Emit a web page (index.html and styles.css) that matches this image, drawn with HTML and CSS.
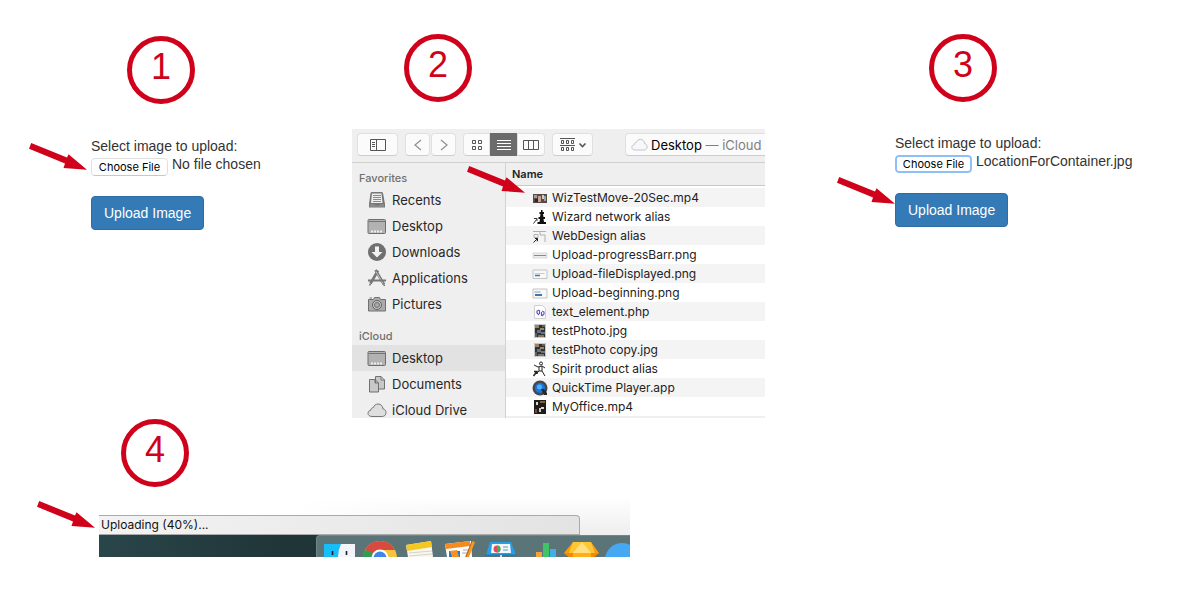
FILE: index.html
```html
<!DOCTYPE html>
<html lang="en">
<head>
<meta charset="utf-8">
<title>Upload an image in four steps</title>
<link rel="stylesheet" href="styles.css">
</head>
<body>
<svg class="sprites" aria-hidden="true">
  <symbol id="arrow" viewBox="0 0 60 30"><path d="M3.200 0 1 5.800l36 14.600-1.500 4.600L59 26.700 40.500 11.300l-1.500 3.200z" fill="#d0021b"/></symbol>
  <symbol id="desk" viewBox="0 0 20 20"><rect x="1" y="3.500" width="17.500" height="14" rx="1" fill="#b2b2b2" stroke="#6e6e6e"/><path d="M1.500 5.500h16.500" stroke="#747474"/><path d="M4 15.500h12" stroke="#eee" stroke-width="2" stroke-dasharray="2 1"/></symbol>
  <symbol id="cloud" viewBox="0 0 20 20"><path d="M5 16.500C2.500 16.500 1 15 1 13.300c0-1.700 1.200-2.900 2.800-3C3.900 8.500 5 7.600 6.300 7.700 7 5.300 8.800 4 11 4c2.900 0 4.800 2 4.900 4.900 2 .3 3.100 1.800 3.100 3.700 0 2.300-1.600 3.900-3.800 3.900z" fill="#dedede" stroke="#777"/></symbol>
  <symbol id="photo" viewBox="0 0 16 16"><path d="M2.500 1.500h11v13h-11z" fill="#35312d" stroke="#c9c9c9"/><path d="M3 2h4v3H3zM8 5h4v2H8z" fill="#9c8464"/><path d="M5 7h4v3H5zM9 9h4v2H9z" fill="#5d7890"/><path d="M6 12h6v2H6z" fill="#847565"/><path d="M10 2h3v2h-3zM3 10h2v4H3z" fill="#5e6366"/></symbol>
</svg>
<main class="guide">
  <div class="top">
    <section class="step step-one">
      <h2 class="badge">1</h2>
      <form class="form">
        <label for="file-one">Select image to upload:</label>
        <div class="picker"><input class="file" id="file-one" type="file" accept="image/*"><span class="file-name">No file chosen</span></div>
        <button class="upload" type="button">Upload Image</button>
      </form>
      <svg class="arrow arrow-one"><use href="#arrow"/></svg>
    </section>

    <section class="step step-two">
      <h2 class="badge">2</h2>
      <div class="finder">
        <div class="toolbar">
          <button class="tool" type="button" aria-label="Toggle sidebar"><svg width="18" height="14" viewBox="0 0 18 14" fill="none" stroke="#555"><path d="M1.500 1.500h15v11h-15zM7.500 1.500v11M3 4.500h3M3 6.500h3M3 8.500h3"/></svg></button>
          <div class="pair">
            <button class="tool" type="button" aria-label="Back"><svg width="12" height="14" viewBox="0 0 12 14" fill="none" stroke="#939393" stroke-width="1.300"><path d="M9 2 3 7l6 5"/></svg></button>
            <button class="tool" type="button" aria-label="Forward"><svg width="12" height="14" viewBox="0 0 12 14" fill="none" stroke="#939393" stroke-width="1.300"><path d="m3 2 6 5-6 5"/></svg></button>
          </div>
          <div class="views">
            <button class="tool" type="button" aria-label="Icons"><svg width="14" height="14" viewBox="0 0 14 14" fill="none" stroke="#555"><path d="M2.500 2.500h3v3h-3zM8.500 2.500h3v3h-3zM2.500 8.500h3v3h-3zM8.500 8.500h3v3h-3z"/></svg></button>
            <button class="tool active" type="button" aria-label="List"><svg width="16" height="14" viewBox="0 0 16 14" stroke="#fff"><path d="M1 2.500h14M1 5.500h14M1 8.500h14M1 11.500h14"/></svg></button>
            <button class="tool" type="button" aria-label="Columns"><svg width="18" height="14" viewBox="0 0 18 14" fill="none" stroke="#555"><path d="M1.500 2.500h15v9h-15zM6.500 2.500v9M11.500 2.500v9"/></svg></button>
          </div>
          <button class="tool" type="button" aria-label="Arrange"><svg width="28" height="14" viewBox="0 0 28 14" fill="none" stroke="#555"><path d="M1 .5h15M1 7.500h15M2.500 2.500h2v3h-2zM7.500 2.500h2v3h-2zM12.500 2.500h2v3h-2zM2.500 9.500h2v3h-2zM7.500 9.500h2v3h-2zM12.500 9.500h2v3h-2z"/><path d="m20.500 5.500 3 3 3-3" stroke-width="1.600"/></svg></button>
          <button class="tool place" type="button"><svg class="place-icon" viewBox="0 0 20 20"><path d="M5 16.500C2.500 16.500 1 15 1 13.300c0-1.700 1.200-2.900 2.800-3C3.900 8.500 5 7.600 6.300 7.700 7 5.300 8.800 4 11 4c2.900 0 4.800 2 4.900 4.900 2 .3 3.100 1.800 3.100 3.700 0 2.300-1.600 3.900-3.800 3.900z" fill="#f6f8fa" stroke="#b5bcc5"/></svg><span>Desktop <span class="muted">— iCloud</span></span></button>
        </div>
        <div class="panes">
          <nav class="sidebar" aria-label="Locations">
            <h3>Favorites</h3>
            <a href="#"><svg viewBox="0 0 20 20"><path d="M4.500 2h10.500l1 1 2 11v3.500H2V14L3.500 3z" fill="#777"/><path d="M5 3.500h9.500l1 9.500H4z" fill="#eee"/><path d="M6 5.500h8M6 7.500h8M6 9.500h8M6 11.500h8" stroke="#8a8a8a"/><path d="M3 14h4l1 1.500h4l1-1.500h4v3H3z" fill="#8a8a8a"/></svg>Recents</a>
            <a href="#"><svg><use href="#desk"/></svg>Desktop</a>
            <a href="#"><svg viewBox="0 0 20 20"><circle cx="10" cy="10" r="9" fill="#707070"/><path d="M8 4.500h4V10h3.500L10 15.500 4.500 10H8z" fill="#f2f2f2"/></svg>Downloads</a>
            <a href="#"><svg viewBox="0 0 20 20" fill="none" stroke="#777"><path d="m8.500 2 8.500 14.500M11 2.500 3.500 15.500" stroke-width="2.600"/><path d="m9 3.500 7 12" stroke="#c4c4c4"/><path d="M1 12.500h18" stroke-width="2"/><path d="m3.500 15.500-1 2M17 16.500l.5 1.500" stroke-width="1.500"/></svg>Applications</a>
            <a href="#"><svg viewBox="0 0 20 20"><path d="M1.500 5.500h5l1-2h5l1 2h5v11.500h-17z" fill="#aaa" stroke="#707070"/><circle cx="10" cy="11" r="4.500" fill="#c5c5c5" stroke="#626262"/><circle cx="10" cy="11" r="2.500" fill="#aaa" stroke="#707070"/><path d="M2.500 4h2.500" stroke="#707070"/></svg>Pictures</a>
            <h3>iCloud</h3>
            <a class="current" href="#"><svg><use href="#desk"/></svg>Desktop</a>
            <a href="#"><svg viewBox="0 0 20 20" fill="#c8c8c8" stroke="#707070"><path d="M8.500 2.500H14l3.500 3.500v9h-9zM14 2.500V6h3.500"/><path d="M2.500 5.500H8L11.500 9v9h-9zM8 5.500V9h3.500"/></svg>Documents</a>
            <a href="#"><svg><use href="#cloud"/></svg>iCloud Drive</a>
          </nav>
          <table class="files">
            <thead><tr><th scope="col">Name</th></tr></thead>
            <tbody>
              <tr><td><svg viewBox="0 0 16 16"><path d="M1 4h14v9H1z" fill="#554a45"/><path d="M2 5h3v3H2zM12 6h2v5h-2z" fill="#98a0a5"/><path d="M6 6h3v6H6z" fill="#caa08c"/><path d="M10 5h2v4h-2z" fill="#d8c8c0"/><path d="M3 9h3v3H3z" fill="#302725"/></svg>WizTestMove-20Sec.mp4</td></tr>
              <tr><td><svg viewBox="0 0 16 16"><path d="M9 1h1.500v2H12v2h-1l.5 3H13v2h-1.500l.5 3h2v2H5.500v-2h2L8 10H6.500V8H8l.5-3h-1V3H9z" fill="#111"/><path d="m1.500 14.500 3-4M2 9.500h3V12" fill="none" stroke="#333"/></svg>Wizard network alias</td></tr>
              <tr><td><svg viewBox="0 0 16 16" fill="none" stroke="#b0b0b0"><path d="M1 3.500h13M2 6.500h4v3H2zM8 3v4h5v7M5 9v5"/><path d="m1.500 14.500 4-4M3 10.500h2.500V13" stroke="#222"/></svg>WebDesign alias</td></tr>
              <tr><td><svg viewBox="0 0 16 16"><path d="M1 6h14v5H1z" fill="#eee" stroke="#bbb" stroke-width=".5"/><path d="M2 8.500h12" stroke="#888"/></svg>Upload-progressBarr.png</td></tr>
              <tr><td><svg viewBox="0 0 16 16"><path d="M1 4h14v8.500H1z" fill="#f8f8f8" stroke="#c4c4c4"/><path d="M2.500 7.500h10" stroke="#ccc"/><path d="M3 9.500h5" stroke="#3478b7" stroke-width="1.500"/></svg>Upload-fileDisplayed.png</td></tr>
              <tr><td><svg viewBox="0 0 16 16"><path d="M1 4h14v9H1z" fill="#f8f8f8" stroke="#c4c4c4"/><path d="M2.500 7h6" stroke="#999"/><path d="M3 10h7" stroke="#3478b7" stroke-width="2"/></svg>Upload-beginning.png</td></tr>
              <tr><td><svg viewBox="0 0 16 16"><path d="M2.500 1.500h8l3 3v10h-11z" fill="#fff" stroke="#cfcfcf"/><path d="M7 6 5 7v2l2 2M10 7l2 1v2l-2 2M7.500 6v4M9.500 8v4" fill="none" stroke="#6257c8" stroke-width="1.200"/></svg>text_element.php</td></tr>
              <tr><td><svg><use href="#photo"/></svg>testPhoto.jpg</td></tr>
              <tr><td><svg><use href="#photo"/></svg>testPhoto copy.jpg</td></tr>
              <tr><td><svg viewBox="0 0 16 16" fill="none" stroke="#222"><circle cx="9" cy="2.500" r="1.500"/><path d="m2 4 4 2 4-1 3 2M7 6v4l-3 3M10 5v5l3 5M7 10h3"/><path d="m1.500 15 3-4M2 10.500h3V13" stroke-width="1.500"/></svg>Spirit product alias</td></tr>
              <tr><td><svg viewBox="0 0 16 16"><circle cx="8" cy="8" r="7.500" fill="#44474d"/><circle cx="8" cy="8" r="5" fill="#1879d8"/><circle cx="7.500" cy="7" r="2.500" fill="#4fb0ff"/><path d="M9 9h3l3 4v2h-3z" fill="#24272c"/></svg>QuickTime Player.app</td></tr>
              <tr><td><svg viewBox="0 0 16 16"><path d="M2 1h12v14H2z" fill="#201c1a"/><path d="M4 3h2v3H4zM9 8h3v2H9z" fill="#d9d6d0"/><path d="M8 2h5v2H8z" fill="#87602d"/><path d="M7 9h2v4H7z" fill="#c6c9cc"/><path d="M3 10h2v4H3z" fill="#79472f"/></svg>MyOffice.mp4</td></tr>
            </tbody>
          </table>
        </div>
      </div>
      <svg class="arrow arrow-two"><use href="#arrow"/></svg>
    </section>

    <section class="step step-three">
      <h2 class="badge">3</h2>
      <form class="form">
        <label for="file-three">Select image to upload:</label>
        <div class="picker"><input class="file focused" id="file-three" type="file" accept="image/*"><span class="file-name">LocationForContainer.jpg</span></div>
        <button class="upload" type="button">Upload Image</button>
      </form>
      <svg class="arrow arrow-three"><use href="#arrow"/></svg>
    </section>
  </div>

  <section class="step step-four">
    <h2 class="badge">4</h2>
    <div class="browser">
      <div class="status" role="status">Uploading (40%)...</div>
      <div class="desktop">
        <svg class="dock" viewBox="0 0 314 22" width="314" height="22" aria-hidden="true">
          <path d="M0 22V4Q0 0 4 0h310v22z" fill="#5b7478"/><path d="M.5 22V4Q.5.5 4 .5h310" fill="none" stroke="#6f868a"/>
          <path d="M8 22V9h31v13z" fill="#f2f4fa"/><path d="M8 22V9h17q-3 6-3 13z" fill="#18bdf8"/><path d="M16.500 16v4M30.500 16v4" stroke="#17222c" stroke-width="1.600"/>
          <circle cx="64" cy="23" r="17" fill="#f8c33e"/><path d="M49 15A17 17 0 0 1 79 15H64a8 8 0 0 0-7 4z" fill="#d84a3e"/><path d="M49 15q-3 4-2 8h10v-5z" fill="#2f9e54"/><circle cx="64" cy="23" r="8.500" fill="#fff"/><circle cx="64" cy="23" r="6.500" fill="#4285e8"/>
          <path d="m90 10 25-4 2 16H92z" fill="#f8f7ef"/><path d="m90 10 25-4 1 6-25 4z" fill="#f4c721"/><path d="m93 18 23-2M93 21l23-2" stroke="#d7d3c8"/>
          <path d="m129 9 26-3 1 16h-25z" fill="#fff"/><path d="m129 9 25-3v5l-24 3z" fill="#f58a21"/><path d="M133 16h11v6h-11z" fill="#2478cf"/><path d="m134 16 7-1 2 7h-7z" fill="#f59122"/><path d="M147 15h6M146 18h6" stroke="#aaa"/><path d="m156 6 3 1-6 15h-4z" fill="#f79a21"/><path d="m156 6-6 16" stroke="#b75a22"/>
          <path d="m174 7h21l5 13h-30z" fill="#269fe6"/><path d="M176 9h18l1 9h-20z" fill="#f5f8fb"/><circle cx="181" cy="14" r="3.500" fill="#e74a5d"/><path d="M181 14v-3.500a3.500 3.500 0 0 1 0 7z" fill="#35b85d"/><path d="M187 12h5M187 15h5" stroke="#469be0"/><path d="M169 20h31" stroke="#1975b7"/><path d="M184 20h2v2h-2z" fill="#ddd"/>
          <path d="M220 17h6v5h-6z" fill="#f2a33d"/><path d="M227 8h6v14h-6z" fill="#41c466"/><path d="M234 14h6v8h-6z" fill="#43ade8"/>
          <path d="M257 7h18l8 11-5 4h-25l-5-4z" fill="#f99b10"/><path d="M257 7h18l4 11h-26z" fill="#ffc633"/><path d="m257 18 9-11 9 11z" fill="#ffe080"/><path d="M248 18h35l-5 4h-25z" fill="#f08a09"/><path d="M257 18h18v4h-18z" fill="#ffb019"/>
          <circle cx="306" cy="25" r="17" fill="#46a7f2"/>
        </svg>
      </div>
    </div>
    <svg class="arrow arrow-four"><use href="#arrow"/></svg>
  </section>
</main>
</body>
</html>
```
FILE: styles.css
```css
* { box-sizing: border-box; }
body { margin: 0; background: #fff; color: #333; font: 14px/20px "Liberation Sans", Arial, sans-serif; }
h2, h3 { margin: 0; font-weight: 400; }
.sprites { display: block; width: 0; height: 0; }
.guide { padding-bottom: 48px; }
.top { display: grid; grid-template-columns: 352fr 543fr 295fr; align-items: start; }
.step { position: relative; }
.step-one { padding: 36px 0 0 91px; }
.step-two { padding-top: 34px; }
.step-three { padding-top: 34px; }
.step-four { padding-left: 99px; margin-top: 1px; }

.badge { width: 68px; height: 68px; border: 5px solid #d0021b; border-radius: 50%; color: #d0021b; font-size: 36px; line-height: 52px; text-align: center; }
.step-one .badge { margin-left: 36px; }
.step-two .badge { margin-left: 52px; }
.step-three .badge { margin-left: 34px; }
.step-four .badge { margin-left: 22px; }

.arrow { position: absolute; width: 60px; height: 30px; }
.arrow-one { left: 28px; top: 143px; }
.arrow-two { left: 114px; top: 166px; }
.arrow-three { left: -59px; top: 177px; }
.arrow-four { left: 36px; top: 82px; }

.form { display: flex; flex-direction: column; align-items: flex-start; margin-top: 32px; }
.step-three .form { margin-top: 31px; }
.picker { display: flex; align-items: flex-start; height: 20px; gap: 4px; }
.file { width: 77px; height: 18px; margin-top: 2px; border-radius: 4px; color: transparent; font: 11px/16px Inter, sans-serif; overflow: hidden; }
.file::file-selector-button { width: 77px; height: 18px; margin: 0; padding: 0; border: 1px solid #e0e0e0; border-bottom-color: #c8c8c8; border-radius: 4px; background: #fff; color: #000; font: 11px/16px Inter, sans-serif; }
.focused::file-selector-button { border: 2px solid #8fbff7; line-height: 14px; }
.file-name { line-height: 17px; }
.upload { height: 34px; margin-top: 20px; padding: 0 12px; border: 1px solid #2e6da4; border-radius: 4px; background: #337ab7; color: #fff; font: 14px/20px "Liberation Sans", Arial, sans-serif; }

.finder { max-width: 413px; margin-top: 27px; overflow: hidden; background: #efefef; font-family: Inter, sans-serif; color: #222; }
.toolbar { display: flex; gap: 7px; height: 34px; padding: 4px 0 0 5px; border-bottom: 1px solid #cfcfcf; }
.tool { display: flex; align-items: center; justify-content: center; flex: none; width: 41px; height: 23px; padding: 0; border: 1px solid #e0e0e0; border-bottom-color: #cdcdcd; border-radius: 4px; background: #fbfbfb; }
.pair { display: flex; gap: 1px; }
.pair .tool { width: 25px; }
.views { display: flex; }
.views .tool { width: 27px; border-radius: 0; }
.views .tool:first-child { border-radius: 4px 0 0 4px; }
.views .tool:last-child { width: 28px; border-radius: 0 4px 4px 0; }
.views .active { border-color: #6b6b6b; background: #6b6b6b; }
.place { flex: 1 0 auto; justify-content: flex-start; gap: 3px; margin-left: 25px; padding-left: 5px; border-right: 0; border-radius: 4px 0 0 4px; color: #000; font: 13px/20px Inter, sans-serif; white-space: nowrap; }
.place-icon { width: 17px; height: 17px; }
.muted { color: #808080; }
.panes { display: grid; grid-template-columns: 154px 1fr; }
.sidebar { height: 255px; overflow: hidden; border-right: 1px solid #d2d2d2; }
.sidebar h3 { height: 24px; padding: 5px 0 0 7px; color: #707070; font-size: 11px; line-height: 20px; font-weight: 500; }
.sidebar a { display: flex; align-items: center; gap: 5px; height: 26px; padding-left: 15px; color: #282828; font-size: 13px; text-decoration: none; }
.sidebar a + h3 { height: 28px; padding-top: 9px; }
.sidebar svg { width: 20px; height: 20px; }
.sidebar .current { background: #e2e2e2; }
.files { width: 100%; border-collapse: collapse; background: #fff; align-self: start; }
.files th { height: 25px; padding: 0 0 3px 6px; background: linear-gradient(#efefef 22px, #c8c8c8 22px, #c8c8c8 23px, #fff 23px); font-size: 11px; line-height: 20px; font-weight: 600; text-align: left; }
.files td { height: 19px; padding: 0 0 0 26px; font-size: 12px; line-height: 19px; white-space: nowrap; }
.files tr:nth-child(odd) td { background: #f4f4f4; }
.files svg { width: 16px; height: 16px; margin: 2px 4px 0 0; vertical-align: top; }

.browser { max-width: 531px; padding-top: 28px; background: linear-gradient(90deg, #fff 35%, transparent 65%), linear-gradient(#fff 10px, #eee 48px); }
.status { width: 481px; max-width: 100%; height: 20px; padding-left: 2px; border: 1px solid #aaa; border-left: 0; border-radius: 0 4px 0 0; background: linear-gradient(90deg, #f3f3f3, #e3e3e3); color: #111; font: 12px/18px Inter, sans-serif; }
.desktop { display: flex; justify-content: flex-end; background: linear-gradient(90deg, #29464a, #203538 35%); overflow: hidden; }
.dock { flex: none; display: block; }
```
